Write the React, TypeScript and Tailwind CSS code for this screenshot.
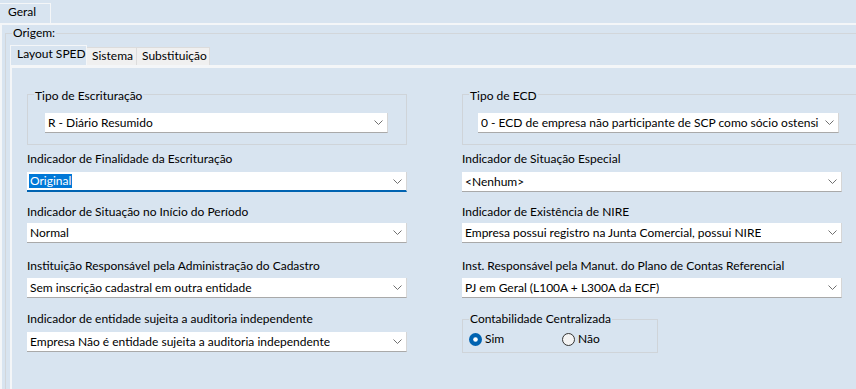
import React from "react";

function Chevron() {
  return (
    <svg width="9" height="5" viewBox="0 0 9 5" className="shrink-0">
      <path d="M0.5 0.5 L4.5 4.5 L8.5 0.5" fill="none" stroke="#707070" strokeWidth="1" />
    </svg>
  );
}

function Select({ value, focused = false }: { value: string; focused?: boolean }) {
  return (
    <div
      className={`flex h-[20px] items-center justify-between gap-[6px] bg-white pr-[4px] border-r border-r-[#d6d6d6] ${
        focused ? "pl-[2px] border-b-2 border-b-[#0063b1]" : "pl-[3px] border-b border-b-[#a9a9a9]"
      }`}
    >
      {focused ? (
        <span className="bg-[#0078d7] px-[1px] text-white leading-[14px]">{value}</span>
      ) : (
        <span className="min-w-0 overflow-hidden whitespace-nowrap">{value}</span>
      )}
      <Chevron />
    </div>
  );
}

function Field({ label, value, mt, gap, focused }: { label: string; value: string; mt: string; gap: string; focused?: boolean }) {
  return (
    <div className={mt}>
      <div className="h-[16px] whitespace-nowrap">{label}</div>
      <div className={gap}>
        <Select value={value} focused={focused} />
      </div>
    </div>
  );
}

function RadioOn() {
  return (
    <svg width="13" height="13" viewBox="0 0 13 13" className="shrink-0">
      <circle cx="6.5" cy="6.5" r="6.5" fill="#0063b1" />
      <circle cx="6.5" cy="6.5" r="2.3" fill="#ffffff" />
    </svg>
  );
}

function RadioOff() {
  return (
    <svg width="13" height="13" viewBox="0 0 13 13" className="shrink-0">
      <circle cx="6.5" cy="6.5" r="6" fill="#f3f3f3" stroke="#333333" strokeWidth="1" />
    </svg>
  );
}

export default function App() {
  return (
    <div className="w-[856px] h-[389px] overflow-hidden bg-[#d8e4f0] text-[12px] leading-[16px] text-black font-['Lato',sans-serif]">
      {/* abas principais */}
      <div className="flex h-[23px] pt-[3px]">
        <div className="h-[20px] w-[51px] border-t border-r border-[#f4f6f8] pl-[8px]">Geral</div>
      </div>
      <div className="h-[366px] border-t-2 border-l-2 border-[#f4f6f8] pl-[3px]">
        <fieldset className="h-[380px] border-t border-l border-[#d2d6da]">
          <legend className="ml-[6px] px-[1px] leading-[16px]">Origem:</legend>
          <div className="pl-[4px] pt-[4px]">
            <div className="flex h-[20px] items-end whitespace-nowrap">
              <div className="h-[20px] w-[77px] border-t border-l border-r border-[#f4f6f8] pl-[6px]">Layout SPED</div>
              <div className="h-[18px] w-[50px] bg-[#f0f0f0] border-t border-r border-[#dcdcdc] pl-[5px] leading-[15px]">Sistema</div>
              <div className="h-[18px] w-[73px] bg-[#f0f0f0] border-t border-r border-[#dcdcdc] pl-[5px] leading-[15px]">Substituição</div>
            </div>
            <div className="h-[330px] border-t-[3px] border-l-2 border-[#f4f6f8] pl-[15px] pt-[16px]">
              <div className="grid grid-cols-[380px_380px] gap-x-[55px]">
                <fieldset className="border border-[#cfd4d9] pl-[17px] pr-[18px] pb-[11px]">
                  <legend className="-ml-[11px] px-[1px] pt-[4px]">Tipo de Escrituração</legend>
                  <div className="mt-[9px]">
                    <Select value="R - Diário Resumido" />
                  </div>
                </fieldset>
                <fieldset className="border border-[#cfd4d9] pl-[15px] pr-[18px] pb-[11px]">
                  <legend className="-ml-[9px] px-[1px] pt-[4px]">Tipo de ECD</legend>
                  <div className="mt-[9px]">
                    <Select value="0 - ECD de empresa não participante de SCP como sócio ostensi" />
                  </div>
                </fieldset>

                <Field mt="mt-[6px]" gap="mt-[5px]" label="Indicador de Finalidade da Escrituração" value="Original" focused />
                <Field mt="mt-[6px]" gap="mt-[5px]" label="Indicador de Situação Especial" value="<Nenhum>" />

                <Field mt="mt-[12px]" gap="mt-[3px]" label="Indicador de Situação no Início do Período" value="Normal" />
                <Field mt="mt-[12px]" gap="mt-[3px]" label="Indicador de Existência de NIRE" value="Empresa possui registro na Junta Comercial, possui NIRE" />

                <Field mt="mt-[15px]" gap="mt-[4px]" label="Instituição Responsável pela Administração do Cadastro" value="Sem inscrição cadastral em outra entidade" />
                <Field mt="mt-[15px]" gap="mt-[4px]" label="Inst. Responsável pela Manut. do Plano de Contas Referencial" value="PJ em Geral (L100A + L300A da ECF)" />

                <Field mt="mt-[13px]" gap="mt-[5px]" label="Indicador de entidade sujeita a auditoria independente" value="Empresa Não é entidade sujeita a auditoria independente" />
                <div className="mt-[13px]">
                  <fieldset className="w-[196px] border border-[#cfd4d9] pl-[6px] pb-[5px]">
                    <legend className="ml-0 px-[1px]">Contabilidade Centralizada</legend>
                    <div className="mt-[4px] flex h-[16px] items-center">
                      <div className="flex w-[93px] items-center">
                        <RadioOn />
                        <span className="ml-[3px]">Sim</span>
                      </div>
                      <div className="flex items-center">
                        <RadioOff />
                        <span className="ml-[3px]">Não</span>
                      </div>
                    </div>
                  </fieldset>
                </div>
              </div>
            </div>
          </div>
        </fieldset>
      </div>
    </div>
  );
}
